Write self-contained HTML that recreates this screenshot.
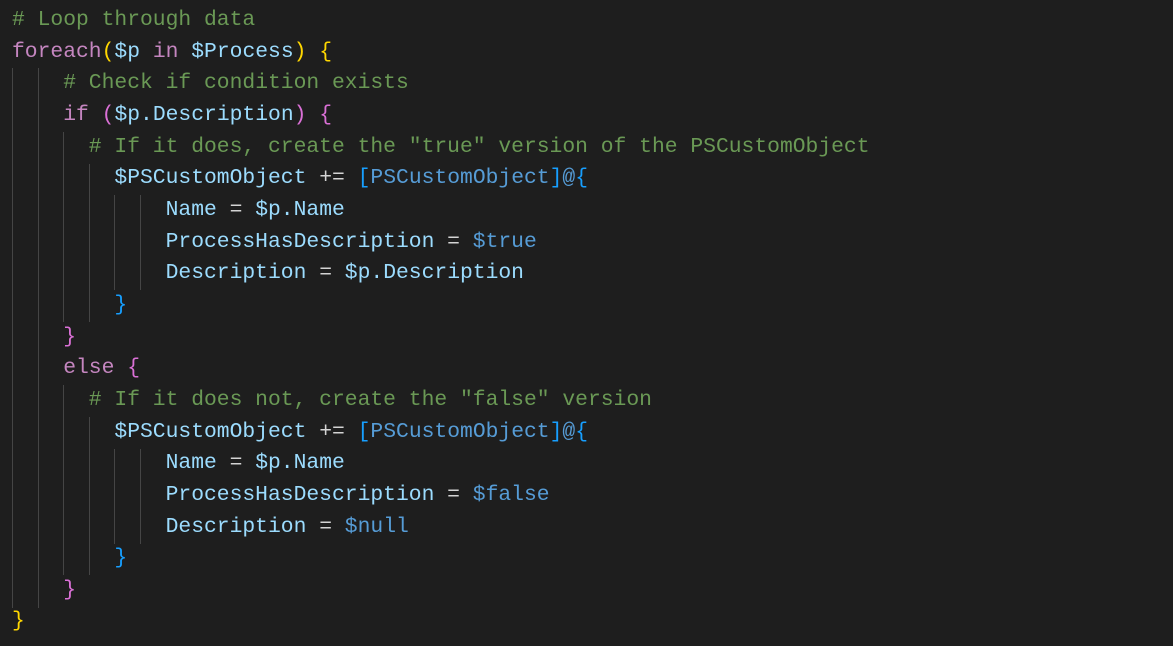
<!DOCTYPE html>
<html><head><style>
html,body{margin:0;padding:0;background:#1e1e1e;width:1173px;height:646px;overflow:hidden}
pre{margin:0;position:absolute;left:12px;top:5px;font-family:"Liberation Mono",monospace;font-size:21.33px;line-height:31.65px;color:#d4d4d4}
.c{color:#6a9955}.k{color:#c586c0}.v{color:#9cdcfe}.y{color:#ffd700}.p{color:#da70d6}.b{color:#179fff}.t{color:#569cd6}.w{color:#d4d4d4}
.g{position:absolute;width:1px;background:#454545}
</style></head><body>
<div class="g" style="left:12px;top:68px;height:540px"></div>
<div class="g" style="left:38px;top:68px;height:540px"></div>
<div class="g" style="left:63px;top:132px;height:190px"></div>
<div class="g" style="left:89px;top:164px;height:158px"></div>
<div class="g" style="left:114px;top:195px;height:95px"></div>
<div class="g" style="left:140px;top:195px;height:95px"></div>
<div class="g" style="left:63px;top:385px;height:190px"></div>
<div class="g" style="left:89px;top:417px;height:158px"></div>
<div class="g" style="left:114px;top:449px;height:95px"></div>
<div class="g" style="left:140px;top:449px;height:95px"></div>
<pre><span class="c"># Loop through data</span>
<span class="k">foreach</span><span class="y">(</span><span class="v">$p</span> <span class="k">in</span> <span class="v">$Process</span><span class="y">)</span> <span class="y">{</span>
    <span class="c"># Check if condition exists</span>
    <span class="k">if</span> <span class="p">(</span><span class="v">$p.Description</span><span class="p">)</span> <span class="p">{</span>
      <span class="c"># If it does, create the "true" version of the PSCustomObject</span>
        <span class="v">$PSCustomObject</span> += <span class="b">[</span><span class="t">PSCustomObject</span><span class="b">]</span><span class="t">@</span><span class="b">{</span>
            <span class="v">Name</span> = <span class="v">$p.Name</span>
            <span class="v">ProcessHasDescription</span> = <span class="t">$true</span>
            <span class="v">Description</span> = <span class="v">$p.Description</span>
        <span class="b">}</span>
    <span class="p">}</span>
    <span class="k">else</span> <span class="p">{</span>
      <span class="c"># If it does not, create the "false" version</span>
        <span class="v">$PSCustomObject</span> += <span class="b">[</span><span class="t">PSCustomObject</span><span class="b">]</span><span class="t">@</span><span class="b">{</span>
            <span class="v">Name</span> = <span class="v">$p.Name</span>
            <span class="v">ProcessHasDescription</span> = <span class="t">$false</span>
            <span class="v">Description</span> = <span class="t">$null</span>
        <span class="b">}</span>
    <span class="p">}</span>
<span class="y">}</span></pre>
</body></html>
